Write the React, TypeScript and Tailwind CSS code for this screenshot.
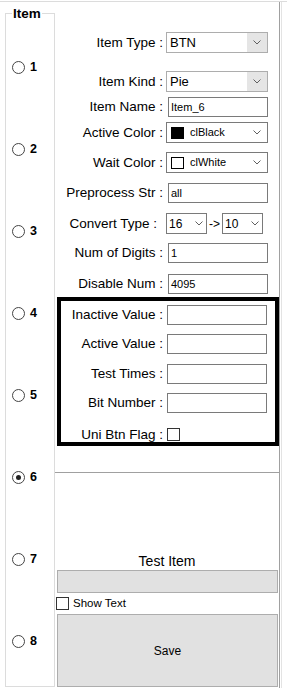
import React from 'react';

const Chevron: React.FC = () => (
  <svg width="8" height="5" viewBox="0 0 8 5" className="block">
    <polyline points="0.5,0.5 4,4 7.5,0.5" fill="none" stroke="#606060" strokeWidth="1" />
  </svg>
);

const Label: React.FC<{ text: string; w: number; pr?: string }> = ({ text, w, pr }) => (
  <div className={`shrink-0 text-right whitespace-nowrap text-[13.5px] ${pr ?? ''}`} style={{ width: w }}>
    {text}
  </div>
);

const Edit: React.FC<{ value?: string; ml?: string }> = ({ value, ml }) => (
  <div className={`h-[20px] w-[100px] border border-[#7a7a7a] bg-white flex items-center pl-[2px] text-[11px] ${ml ?? 'ml-[5px]'}`}>
    {value}
  </div>
);

const Combo: React.FC<{ value: string; button?: boolean }> = ({ value, button }) => (
  <div className="ml-[3px] h-[21px] w-[102px] border border-[#adadad] bg-white flex items-stretch">
    <div className="flex-1 flex items-center pl-[3px] text-[13px]">{value}</div>
    <div className={`w-[20px] flex items-center justify-center ${button ? 'bg-[#e5e5e5]' : ''}`}>
      <Chevron />
    </div>
  </div>
);

const ColorCombo: React.FC<{ value: string; black?: boolean }> = ({ value, black }) => (
  <div className="ml-[3px] h-[21px] w-[102px] border border-[#7a7a7a] bg-white flex items-center">
    <div className={`ml-[4px] w-[13px] h-[12px] border border-black ${black ? 'bg-black' : 'bg-white'}`} />
    <div className="ml-[6px] flex-1 text-[11px]">{value}</div>
    <div className="w-[20px] flex items-center justify-center">
      <Chevron />
    </div>
  </div>
);

const SmallCombo: React.FC<{ value: string }> = ({ value }) => (
  <div className="h-[21px] w-[41px] border border-[#7a7a7a] bg-white flex items-center">
    <div className="flex-1 pl-[2px] text-[12px]">{value}</div>
    <div className="w-[14px] flex items-center justify-center">
      <Chevron />
    </div>
  </div>
);

const Check: React.FC = () => <div className="w-[13px] h-[13px] border border-[#333] bg-white shrink-0" />;

const Radio: React.FC<{ n: number; checked?: boolean }> = ({ n, checked }) => (
  <div className="h-[82px] flex items-center">
    <div className="w-[13px] h-[13px] rounded-full border border-[#444] bg-white flex items-center justify-center">
      {checked && <div className="w-[5px] h-[5px] rounded-full bg-[#222]" />}
    </div>
    <span className="ml-[5px] font-bold text-[12.5px]">{n}</span>
  </div>
);

export default function App() {
  return (
    <div className="w-[287px] h-[689px] bg-white overflow-hidden text-[12px] text-black font-['Liberation_Sans',Arial,sans-serif] leading-none">
      <div className="mt-px h-px bg-[#dcdcdc]" />
      <div className="flex h-[687px]">
        {/* Item group */}
        <div className="w-[55px] shrink-0 pl-[5px] pt-[11px]">
          <div className="relative w-[50px] h-[674px] border border-[#dcdcdc] pl-[6px] pt-[12px]">
            <span className="absolute left-[6px] top-[-7px] bg-white px-[1px] font-bold text-[13.5px] leading-[13px]">Item</span>
            {[1, 2, 3, 4, 5, 6, 7, 8].map(n => (
              <Radio key={n} n={n} checked={n === 6} />
            ))}
          </div>
        </div>

        {/* Detail panel */}
        <div className="w-[225px] shrink-0 h-[686px] border-r border-[#a0a0a0] flex flex-col">
          <div className="mt-[30px] flex items-center h-[21px]">
            <Label text="Item Type :" w={108} />
            <Combo value="BTN" button />
          </div>
          <div className="mt-[18px] flex items-center h-[21px]">
            <Label text="Item Kind :" w={108} />
            <Combo value="Pie" button />
          </div>
          <div className="mt-[5px] flex items-center h-[20px]">
            <Label text="Item Name :" w={108} />
            <Edit value="Item_6" />
          </div>
          <div className="mt-[5px] flex items-center h-[21px]">
            <Label text="Active Color :" w={108} />
            <ColorCombo value="clBlack" black />
          </div>
          <div className="mt-[9px] flex items-center h-[21px]">
            <Label text="Wait Color :" w={108} />
            <ColorCombo value="clWhite" />
          </div>
          <div className="mt-[10px] flex items-center h-[20px]">
            <Label text="Preprocess Str :" w={108} />
            <Edit value="all" />
          </div>
          <div className="mt-[10px] flex items-center h-[21px]">
            <Label text="Convert Type :" w={108} pr="pr-[6px]" />
            <div className="ml-[3px] flex items-center">
              <SmallCombo value="16" />
              <span className="mx-[2px] text-[12px]">-&gt;</span>
              <SmallCombo value="10" />
            </div>
          </div>
          <div className="mt-[9px] flex items-center h-[20px]">
            <Label text="Num of Digits :" w={108} />
            <Edit value="1" />
          </div>
          <div className="mt-[11px] flex items-center h-[20px]">
            <Label text="Disable Num :" w={108} />
            <Edit value="4095" />
          </div>

          {/* Button-specific block */}
          <div className="mt-[3px] ml-[2px] w-[222px] h-[149px] border-[4px] border-black pt-[4px] flex flex-col">
            <div className="flex items-center h-[20px]">
              <Label text="Inactive Value :" w={102} />
              <Edit ml="ml-[4px]" />
            </div>
            <div className="mt-[9px] flex items-center h-[20px]">
              <Label text="Active Value :" w={102} />
              <Edit ml="ml-[4px]" />
            </div>
            <div className="mt-[10px] flex items-center h-[20px]">
              <Label text="Test Times :" w={102} />
              <Edit ml="ml-[4px]" />
            </div>
            <div className="mt-[9px] flex items-center h-[20px]">
              <Label text="Bit Number :" w={102} />
              <Edit ml="ml-[4px]" />
            </div>
            <div className="mt-[15px] flex items-center h-[13px]">
              <Label text="Uni Btn Flag :" w={102} />
              <div className="ml-[4px]">
                <Check />
              </div>
            </div>
          </div>

          <div className="mt-[26px] h-px bg-[#a0a0a0]" />

          <div className="mt-[80px] h-[16px] flex items-center justify-center text-[14px]">Test Item</div>
          <div className="mt-[1px] ml-[2px] w-[221px] h-[23px] bg-[#e1e1e1] border border-[#adadad]" />
          <div className="mt-[4px] ml-[1px] h-[13px] flex items-center">
            <Check />
            <span className="ml-[4px] text-[11.5px]">Show Text</span>
          </div>
          <button className="mt-[4px] ml-[2px] w-[221px] h-[73px] bg-[#e1e1e1] border border-[#adadad] text-[12px] flex items-center justify-center">
            Save
          </button>
        </div>
        <div className="ml-px w-px h-[686px] bg-[#e3e3e3]" />
      </div>
    </div>
  );
}
